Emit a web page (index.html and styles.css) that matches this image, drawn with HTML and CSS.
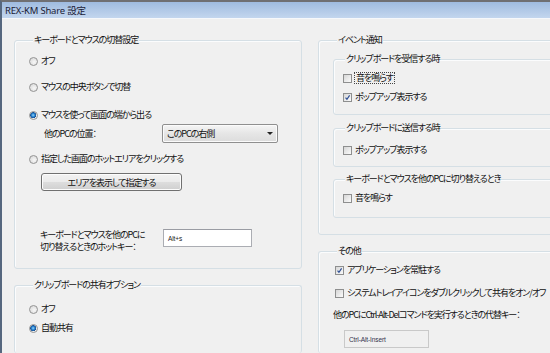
FILE: index.html
```html
<!DOCTYPE html>
<html lang="ja">
<head>
<meta charset="utf-8">
<title>REX-KM Share 設定</title>
<link rel="stylesheet" href="styles.css">
</head>
<body>
<div class="window">
  <div class="titlebar"><span class="title">REX-KM Share 設定</span></div>
  <div class="client">
    <div class="col col-left">
      <fieldset class="group g-switch">
        <legend>キーボードとマウスの切替設定</legend>
        <div class="row r1"><span class="radio"></span><span>オフ</span></div>
        <div class="row r2"><span class="radio"></span><span>マウスの中央ボタンで切替</span></div>
        <div class="row r3"><span class="radio on"></span><span>マウスを使って画面の端から出る</span></div>
        <div class="row r4">
          <span class="pos-label">他のPCの位置：</span>
          <span class="combo"><span>このPCの右側</span><span class="arrow"></span></span>
        </div>
        <div class="row r5"><span class="radio"></span><span>指定した画面のホットエリアをクリックする</span></div>
        <div class="btn-row"><span class="btn">エリアを表示して指定する</span></div>
        <div class="hotkey-row">
          <span class="hotkey-label">キーボードとマウスを他のPCに<br>切り替えるときのホットキー：</span>
          <span class="textbox">Alt+s</span>
        </div>
      </fieldset>
      <fieldset class="group g-clip">
        <legend>クリップボードの共有オプション</legend>
        <div class="row c1"><span class="radio"></span><span>オフ</span></div>
        <div class="row c2"><span class="radio on"></span><span>自動共有</span></div>
      </fieldset>
    </div>
    <div class="col col-right">
      <fieldset class="group g-event">
        <legend>イベント通知</legend>
        <fieldset class="group sub s1">
          <legend>クリップボードを受信する時</legend>
          <div class="row k1"><span class="cb"></span><span class="focus">音を鳴らす</span></div>
          <div class="row k2"><span class="cb"><svg viewBox="0 0 9 9"><path d="M2 4.6 L3.8 6.8 L7.2 1.8" fill="none" stroke="#2c4d94" stroke-width="1.5"/></svg></span><span>ポップアップ表示する</span></div>
        </fieldset>
        <fieldset class="group sub s2">
          <legend>クリップボードに送信する時</legend>
          <div class="row k3"><span class="cb"></span><span>ポップアップ表示する</span></div>
        </fieldset>
        <fieldset class="group sub s3">
          <legend>キーボードとマウスを他のPCに切り替えるとき</legend>
          <div class="row k4"><span class="cb"></span><span>音を鳴らす</span></div>
        </fieldset>
      </fieldset>
      <fieldset class="group g-other">
        <legend>その他</legend>
        <div class="row o1"><span class="cb"><svg viewBox="0 0 9 9"><path d="M2 4.6 L3.8 6.8 L7.2 1.8" fill="none" stroke="#2c4d94" stroke-width="1.5"/></svg></span><span>アプリケーションを常駐する</span></div>
        <div class="row o2"><span class="cb"></span><span>システムトレイアイコンをダブルクリックして共有をオン/オフ</span></div>
        <div class="o3">他のPCにCtrl-Alt-Delコマンドを実行するときの代替キー：</div>
        <div class="o4"><span class="textbox ro">Ctrl-Alt-Insert</span></div>
      </fieldset>
    </div>
  </div>
</div>
</body>
</html>
```

FILE: styles.css
```css
* { box-sizing: border-box; }
html, body { margin: 0; padding: 0; }
body {
  width: 550px;
  height: 353px;
  overflow: hidden;
  background: #f0f0f0;
  font-family: "Noto Sans CJK JP", "Noto Sans", sans-serif;
  font-size: 9px;
  letter-spacing: -1.05px;
  font-feature-settings: "palt";
  color: #111;
}
.window {
  width: 550px;
  height: 353px;
  overflow: hidden;
  border-left: 2px solid #56677f;
  border-top: 2px solid #6f6f73;
  display: flex;
  flex-direction: column;
}
.titlebar {
  height: 17px;
  flex: none;
  background: linear-gradient(#9fbbe0, #c3d6ee);
  border-bottom: 1px solid #f6f8fb;
  display: flex;
  align-items: center;
  padding-left: 3px;
}
.title {
  font-family: "Noto Sans", "Noto Sans CJK JP", sans-serif;
  font-size: 9.5px;
  letter-spacing: -0.2px;
  color: #1c1c38;
}
.client {
  display: flex;
  gap: 16px;
  padding: 15px 0 0 12px;
  flex: 1;
  overflow: hidden;
}
.col { display: flex; flex-direction: column; gap: 10px; flex: none; }
.col-left { width: 288px; }
.col-right { width: 260px; }

.group {
  margin: 0;
  padding: 0;
  border: 1px solid #d5dfe5;
  border-radius: 3px;
  box-shadow: inset 1px 1px 0 #fbfcfd;
  min-width: 0;
}
.group > legend {
  line-height: 12px;
  height: 12px;
  padding: 0 1px;
  margin-left: 4px;
  background: #f0f0f0;
}
.row {
  display: flex;
  align-items: center;
  height: 14px;
  line-height: 14px;
  gap: 3px;
  white-space: nowrap;
}
.radio {
  width: 9px;
  height: 9px;
  border-radius: 50%;
  border: 1px solid #939393;
  background: radial-gradient(circle at 60% 60%, #f7f7f7, #d4d4d4);
  flex: none;
}
.radio.on {
  background: radial-gradient(circle at 45% 45%, #9bd8fb 0, #2a86d2 1.6px, #164f94 2.8px, #e9e9e9 3.2px, #f7f7f7 4px);
}
.cb {
  width: 9px;
  height: 9px;
  border: 1px solid #8e8f8f;
  background: linear-gradient(135deg, #d6d6d6, #fbfbfb);
  flex: none;
  display: flex;
}
.cb svg { width: 7px; height: 7px; }
.focus {
  border: 1px dotted #444;
  height: 12px;
  line-height: 10px;
  padding: 0 1px;
  margin-left: -1px;
}

/* left group 1 */
.g-switch { height: 235px; padding: 0 0 0 14px; }
.r1 { margin-top: 8px; }
.r2 { margin-top: 12px; }
.r3 { margin-top: 14px; }
.r4 { margin-top: 2px; height: 19px; padding-left: 15px; gap: 0; }
.pos-label { width: 118px; }
.combo {
  width: 116px;
  height: 19px;
  border: 1px solid #8f8f8f;
  border-radius: 2px;
  background: linear-gradient(#f5f5f5, #e6e6e6 50%, #dcdcdc);
  box-shadow: inset 0 0 0 1px #fbfbfb;
  display: flex;
  align-items: center;
  justify-content: space-between;
  padding: 0 4px 0 4px;
}
.arrow {
  width: 0; height: 0;
  border-left: 3px solid transparent;
  border-right: 3px solid transparent;
  border-top: 3px solid #222;
}
.r5 { margin-top: 9px; }
.btn-row { margin-top: 7px; padding-left: 12px; display: flex; }
.btn {
  width: 141px;
  height: 18px;
  border: 1px solid #707070;
  border-radius: 3px;
  background: linear-gradient(#f2f2f2, #ebebeb 48%, #dddddd 52%, #cfcfcf);
  box-shadow: inset 0 0 0 1px #fcfcfc;
  display: flex;
  align-items: center;
  justify-content: center;
}
.hotkey-row { margin-top: 38px; padding-left: 11px; display: flex; align-items: flex-start; }
.hotkey-label { width: 123px; line-height: 12px; }
.textbox {
  width: 89px;
  height: 18px;
  border: 1px solid #abadb3;
  border-top-color: #9a9ca3;
  background: #fff;
  font-family: "Liberation Sans", sans-serif;
  font-size: 6.5px;
  letter-spacing: -0.1px;
  display: flex;
  align-items: center;
  padding-left: 4px;
  color: #222;
}

/* clip group */
.g-clip { flex: 1; padding: 0 0 0 14px; border-bottom: none; }
.c1 { margin-top: 11px; }
.c2 { margin-top: 5px; }

/* right groups */
.g-event { height: 201px; padding: 0 0 0 14px; }
.sub { padding: 0 0 0 9px; }
.sub > legend { margin-left: 2px; }
.s1 { margin-top: 7px; height: 62px; }
.k1 { margin-top: 6px; }
.k2 { margin-top: 5px; }
.s2 { margin-top: 7px; height: 45px; }
.k3 { margin-top: 9px; }
.s3 { margin-top: 6px; height: 45px; }
.k4 { margin-top: 6px; }

.g-other { flex: 1; padding: 0 0 0 14px; border-bottom: none; }
.g-other .row { padding-left: 2px; }
.o1 { margin-top: 6px; }
.o2 { margin-top: 9px; }
.o3 { margin-top: 8px; line-height: 14px; white-space: nowrap; }
.o4 { margin-top: 8px; padding-left: 11px; display: flex; }
.textbox.ro {
  width: 85px;
  background: #f0f0f0;
  border-color: #c9c9c9;
  color: #33334d;
  font-size: 6.5px;
}
```
